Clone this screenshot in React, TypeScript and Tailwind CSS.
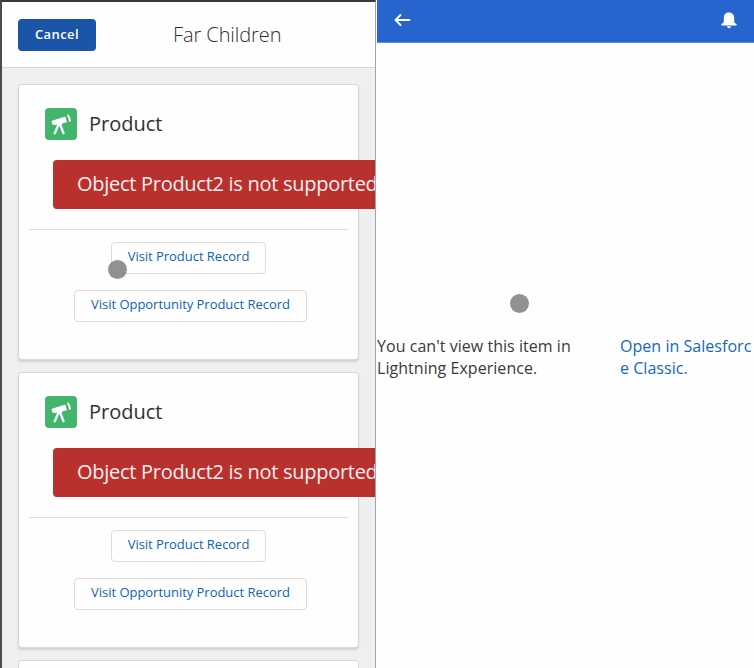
import React from "react";

function TelescopeIcon() {
  return (
    <div className="flex h-8 w-8 items-center justify-center rounded bg-[#43b56d]">
      <svg viewBox="0 0 32 32" className="h-8 w-8" fill="#fff" stroke="#fff" strokeLinecap="round" strokeLinejoin="round">
        <path strokeWidth="1.2" d="M7.200 13.300 19.800 9.300 21.300 13.600 16.600 15.200 16 17.200H12.700L12.300 15.900 8.200 16.500Z" />
        <path fill="none" strokeWidth="2.300" d="M13.400 16.800 9.800 25.200M15.200 16.800 18.500 25.200" />
        <path fill="none" strokeWidth="2" d="M23 7.500Q24.600 9.700 24.900 12.800" />
      </svg>
    </div>
  );
}

function OutlineButton({ label, width }: { label: string; width: string }) {
  return (
    <button
      className={`flex h-8 ${width} items-center justify-center rounded border border-[#dddbda] bg-[#fefefe] pb-0.5 text-[13px] tracking-[-0.03px] whitespace-nowrap text-[#0f65b5]`}
    >
      {label}
    </button>
  );
}

function ProductCard() {
  return (
    <article className="h-[276px] w-[341px] shrink-0 rounded border border-[#d8d8d9] bg-[#fefefe] shadow-[0_2px_2px_rgba(0,0,0,0.12)]">
      <header className="ml-[26px] flex h-[77px] items-center">
        <TelescopeIcon />
        <h2 className="ml-3 text-[20px] leading-8 text-[#303132]">Product</h2>
      </header>
      <div className="-mt-0.5 ml-[34px] flex h-[49px] w-[420px] items-center rounded bg-[#ba302d] pb-0.5 pl-6 text-[20px] tracking-[-0.28px] whitespace-nowrap text-[#fbefef]">
        Object Product2 is not supported
      </div>
      <hr className="mx-[10px] mt-5 border-[#dddddd]" />
      <div className="mt-3 ml-0.5 flex flex-col items-center gap-4">
        <div className="pr-0.5">
          <OutlineButton label="Visit Product Record" width="w-[155px]" />
        </div>
        <div className="pl-0.5">
          <OutlineButton label="Visit Opportunity Product Record" width="w-[233px]" />
        </div>
      </div>
    </article>
  );
}

export default function App() {
  return (
    <div className="relative flex h-[668px] w-[754px] overflow-hidden bg-[#fefefe] font-['Open_Sans',sans-serif]">
      <section className="flex h-full w-[376px] flex-col overflow-hidden border-t-2 border-r border-l-2 border-t-[#383838] border-r-[#a4a4a6] border-l-[#4b4b4d] bg-[#efeff0]">
        <header className="flex h-[66px] shrink-0 items-center border-b border-[#d4d4d8] bg-[#fefefe] pl-4">
          <button className="h-8 w-[78px] rounded bg-[#1b55a8] text-[13px] font-semibold tracking-[0.4px] text-white">Cancel</button>
          <h1 className="ml-[77px] text-[20px] font-light tracking-[-0.08px] text-[#303132]">Far Children</h1>
        </header>
        <main className="ml-4 flex flex-col gap-3 pt-4">
          <ProductCard />
          <ProductCard />
          <article className="h-5 w-[341px] shrink-0 rounded-t border border-[#d8d8d9] bg-[#fefefe]" />
        </main>
      </section>
      <section className="flex h-full min-w-0 flex-1 flex-col pl-px">
        <header className="flex h-[43px] shrink-0 items-center justify-between border-b border-[#5b8fe0] bg-[#2665cd] pr-[17px] pb-0.5 pl-[17px] text-white">
          <svg viewBox="0 0 18 14" className="h-3.5 w-[18px]" fill="none" stroke="currentColor" strokeWidth="1.800" strokeLinecap="round" strokeLinejoin="round">
            <path d="M15.500 7H1.500M6.500 2 1.500 7 6.500 12" />
          </svg>
          <svg viewBox="0 0 16 17" className="h-[17px] w-4" fill="currentColor">
            <path d="M8 .5C5 .5 2.800 2.600 2.800 5.500v3.700c0 1.200-.6 2-1.600 2.400-1.200.5-1.300 1.800-.2 1.800h14c1.100 0 1-1.300-.2-1.800-1-.4-1.600-1.200-1.600-2.400V5.500C13.200 2.600 11 .5 8 .5Z" />
            <path d="M6 14.300h4Q9.700 16.300 8 16.300T6 14.300Z" />
          </svg>
        </header>
        <main className="mt-[292px] flex text-base leading-[22px] tracking-[0.04px]">
          <p className="w-[243px] text-[#3a3a3c]">
            You can't view this item in
            <br />
            Lightning Experience.
          </p>
          <a className="whitespace-nowrap text-[#1468c0]">
            Open in Salesforc
            <br />e Classic.
          </a>
        </main>
      </section>
      <span className="absolute top-[260px] left-[108px] size-[19px] rounded-full bg-[#858585]/90" />
      <span className="absolute top-[294px] left-[510px] size-[19px] rounded-full bg-[#929292]" />
    </div>
  );
}
